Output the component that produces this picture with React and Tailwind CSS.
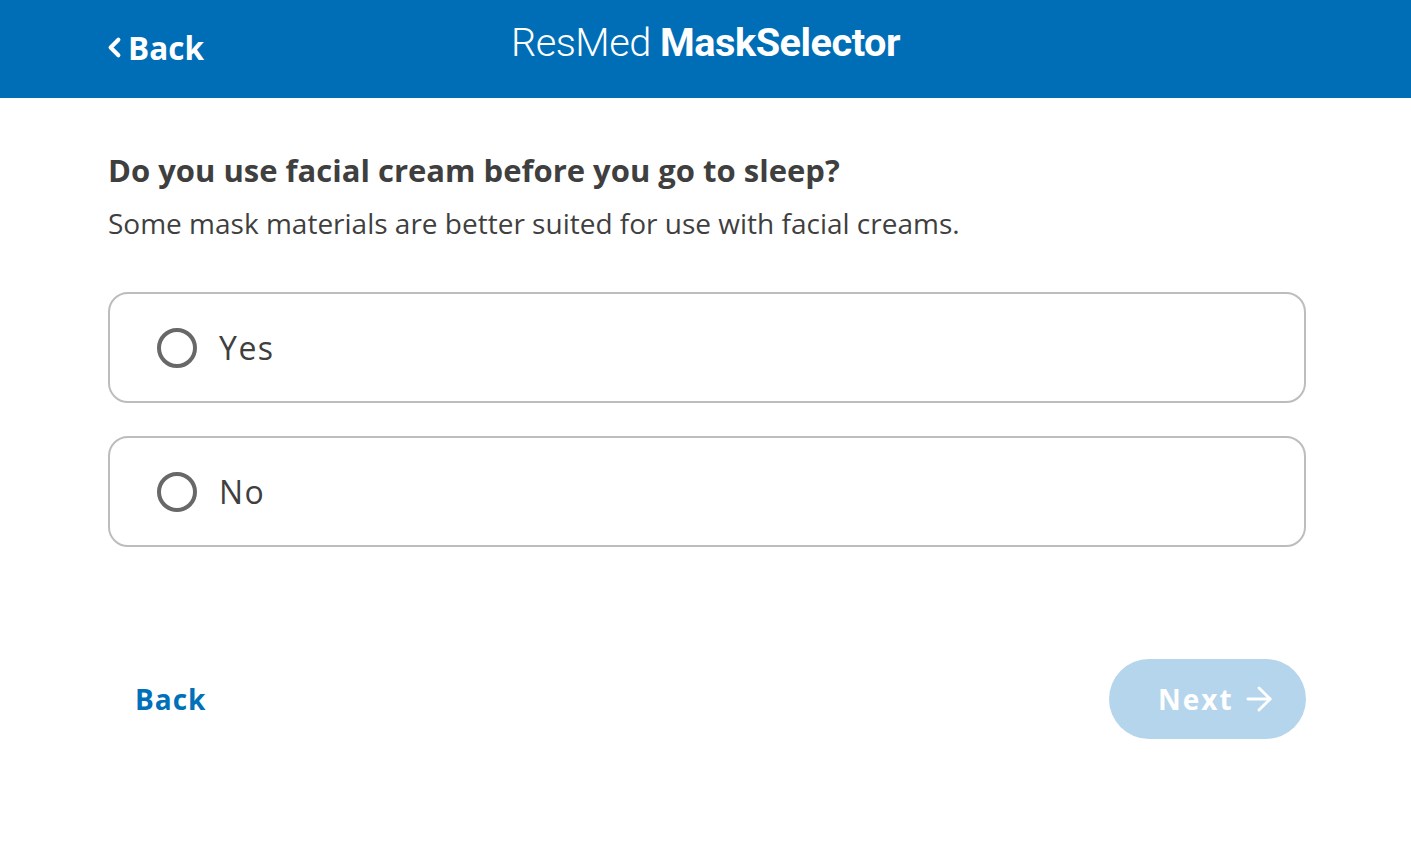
import { ChevronLeft, ArrowRight } from "lucide-react";

const options = ["Yes", "No"];

export default function App() {
  return (
    <div className="min-h-screen bg-white font-['Open_Sans',sans-serif] text-[#404040]">
      {/* Header */}
      <header className="h-[98px] bg-[#006eb7] flex items-center relative">
        <button className="absolute left-[99px] top-[32px] flex items-center text-white font-bold text-[31.5px] leading-none">
          <ChevronLeft size={31} strokeWidth={3.2} className="-mr-[2px]" />
          Back
        </button>
        <h1 className="w-full text-center text-white text-[39.7px] leading-none -mt-[12px] font-['Roboto',sans-serif] tracking-[-0.5px]">
          <span className="font-light">ResMed</span>{" "}
          <span className="font-bold">MaskSelector</span>
        </h1>
      </header>

      {/* Question */}
      <main className="px-[108px] pt-[50px]">
        <h2 className="text-[31px] font-bold leading-[44px] text-[#3f3f3f]">
          Do you use facial cream before you go to sleep?
        </h2>
        <p className="text-[28px] leading-[38px] mt-[12px] text-[#3f3f3f]">
          Some mask materials are better suited for use with facial creams.
        </p>

        <div className="mt-[50px] flex flex-col gap-[33px] w-[1198px]">
          {options.map((opt) => (
            <label
              key={opt}
              className="h-[111px] rounded-[20px] border-2 border-[#bdbdbd] flex items-center pl-[47px] cursor-pointer"
            >
              <span className="w-[40px] h-[40px] rounded-full border-[4px] border-[#686868]" />
              <span className="ml-[22px] text-[32px] tracking-[1.5px] text-[#3f3f3f]">{opt}</span>
            </label>
          ))}
        </div>

        <div className="mt-[112px] w-[1198px] flex items-center justify-between">
          <button className="ml-[27px] text-[#0070b9] font-bold text-[28px] tracking-[1px]">
            Back
          </button>
          <button className="w-[197px] h-[80px] rounded-full bg-[#b4d5eb] text-white font-bold text-[28px] tracking-[2px] flex items-center justify-start gap-[6px] pl-[49px]">
            Next
            <ArrowRight size={38} strokeWidth={1.8} />
          </button>
        </div>
      </main>
    </div>
  );
}
